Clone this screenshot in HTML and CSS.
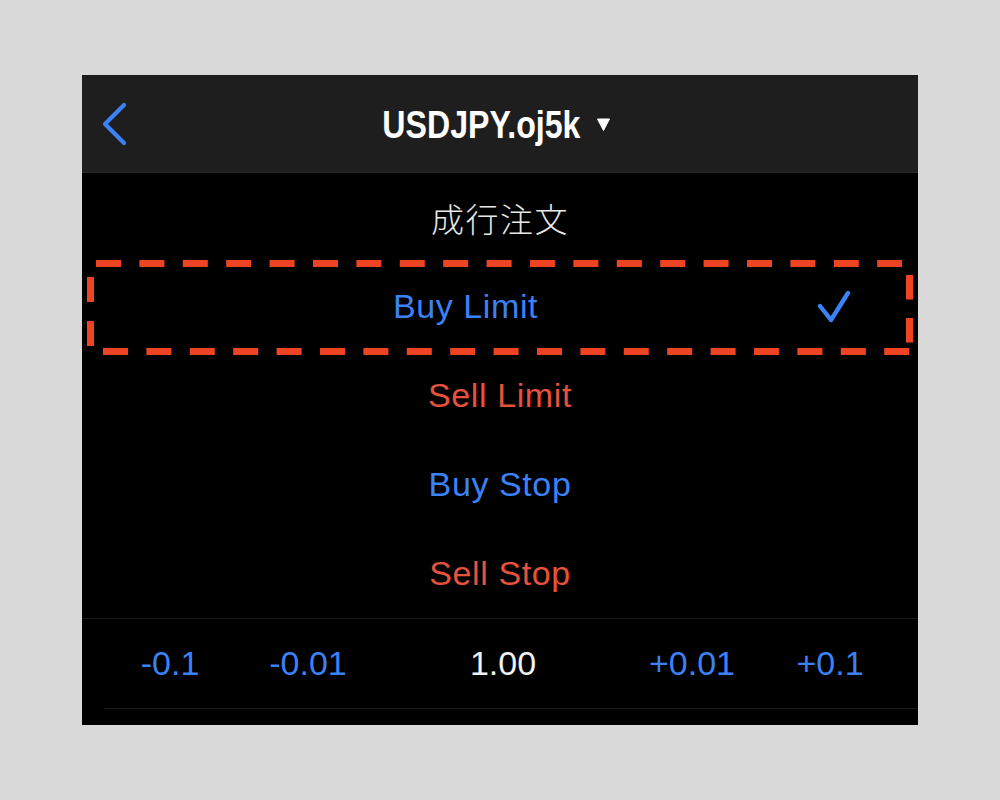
FILE: index.html
```html
<!DOCTYPE html>
<html lang="ja">
    <head>
        <meta charset="UTF-8">
        <meta name="viewport" content="width=device-width, initial-scale=1.0">
        <title>USDJPY.oj5k</title>
        <link rel="stylesheet" href="styles.css">
    </head>
<body>
    <div class="screen">
        <div class="navbar">
            <div class="nav-left">
                <svg class="back" width="28" height="46" viewBox="0 0 28 46">
                    <path d="M24 4 L5 23 L24 42" fill="none" stroke="#3a82f6" stroke-width="4.2" stroke-linecap="round" stroke-linejoin="round"/>
                </svg>
            </div>
            <div class="title">
                <span class="title-text">USDJPY.oj5k</span>
                <svg class="caret" width="13" height="13" viewBox="0 0 13 13">
                    <polygon points="0.5,1 12.5,1 6.5,12.5" fill="#ffffff" stroke="#ffffff" stroke-width="1" stroke-linejoin="round"/>
                </svg>
            </div>
            <div></div>
        </div>

        <div class="list">
            <div class="row"><span class="label label-plain">成行注文</span></div>
            <div class="row row-selected">
                <span class="label label-buy">Buy Limit</span>
                <svg class="check" width="34" height="34" viewBox="0 0 34 34">
                    <path d="M3 16 L14 30 L31 3" fill="none" stroke="#3a82f6" stroke-width="4.4" stroke-linecap="round" stroke-linejoin="round"/>
                </svg>
                <!-- dashed highlight drawn over the row -->
                <svg class="highlight" width="826" height="95" viewBox="0 0 826 95">
                    <g fill="none" stroke="#ef4424" stroke-width="7">
                        <line x1="9" y1="3.5" x2="815" y2="3.5" stroke-dasharray="25 18.4"/>
                        <line x1="3.5" y1="17" x2="3.5" y2="86" stroke-dasharray="25 19"/>
                        <line x1="822.5" y1="15" x2="822.5" y2="83" stroke-dasharray="24.5 18.5"/>
                        <line x1="16" y1="91.5" x2="823" y2="91.5" stroke-dasharray="25 18.4"/>
                    </g>
                </svg>
            </div>
            <div class="row"><span class="label label-sell">Sell Limit</span></div>
            <div class="row"><span class="label label-buy">Buy Stop</span></div>
            <div class="row"><span class="label label-sell">Sell Stop</span></div>
        </div>

        <div class="stepper">
            <span class="step">-0.1</span>
            <span class="step">-0.01</span>
            <span class="volume">1.00</span>
            <span class="step">+0.01</span>
            <span class="step">+0.1</span>
        </div>
    </div>
</body>
</html>
```

FILE: styles.css
```css
body {
    margin: 0;
    background-color: #d9d9d9;
    font-family: "Liberation Sans", Arial, sans-serif;
}
.screen {
    width: 836px;
    height: 650px;
    margin: 75px auto 0;
    background-color: #000;
    overflow: hidden;
}
.navbar {
    height: 97px;
    border-bottom: 1px solid #2a2a2a;
    background-color: #1e1e1e;
    display: grid;
    grid-template-columns: 1fr auto 1fr;
    align-items: center;
}
.nav-left {
    display: flex;
    align-items: center;
    padding-left: 18px;
}
.back {
    display: block;
}
.title {
    display: flex;
    align-items: center;
    gap: 16px;
    margin-right: 7px;
    color: #fff;
}
.title-text {
    display: inline-block;
    font-size: 38px;
    font-weight: bold;
    transform: scaleX(0.845);
    transform-origin: right center;
    margin-left: -37px;
    line-height: 1;
    padding-top: 2px;
}
.caret {
    display: block;
    margin-top: 1px;
}
.list {
    display: flex;
    flex-direction: column;
}
.row {
    position: relative;
    height: 89px;
    display: flex;
    align-items: center;
}
.label {
    flex: 1;
    text-align: center;
    font-size: 34px;
    letter-spacing: 0.6px;
}
.label-plain {
    font-family: "Noto Sans CJK JP", sans-serif;
    font-weight: 300;
    font-size: 33px;
    letter-spacing: 1.5px;
    color: #e8e8e8;
}
.label-buy {
    color: #3a82f6;
}
.label-sell {
    color: #e6523c;
}
.check {
    margin-left: -32px;
    margin-right: 67px;
}
.highlight {
    position: absolute;
    left: 5px;
    top: -2px;
    pointer-events: none;
}
.stepper {
    height: 89px;
    border-top: 1px solid #1a1a1a;
    display: grid;
    grid-template-columns: 176px 100px 284px 100px 176px;
    align-items: center;
    justify-items: center;
    position: relative;
}
.stepper::after {
    content: "";
    position: absolute;
    left: 22px;
    right: 0;
    bottom: -1px;
    border-bottom: 1px solid #1a1a1a;
}
.step {
    font-size: 34px;
    color: #3a82f6;
}
.volume {
    font-size: 34px;
    color: #f2f2f2;
    margin-left: 6px;
}
```
